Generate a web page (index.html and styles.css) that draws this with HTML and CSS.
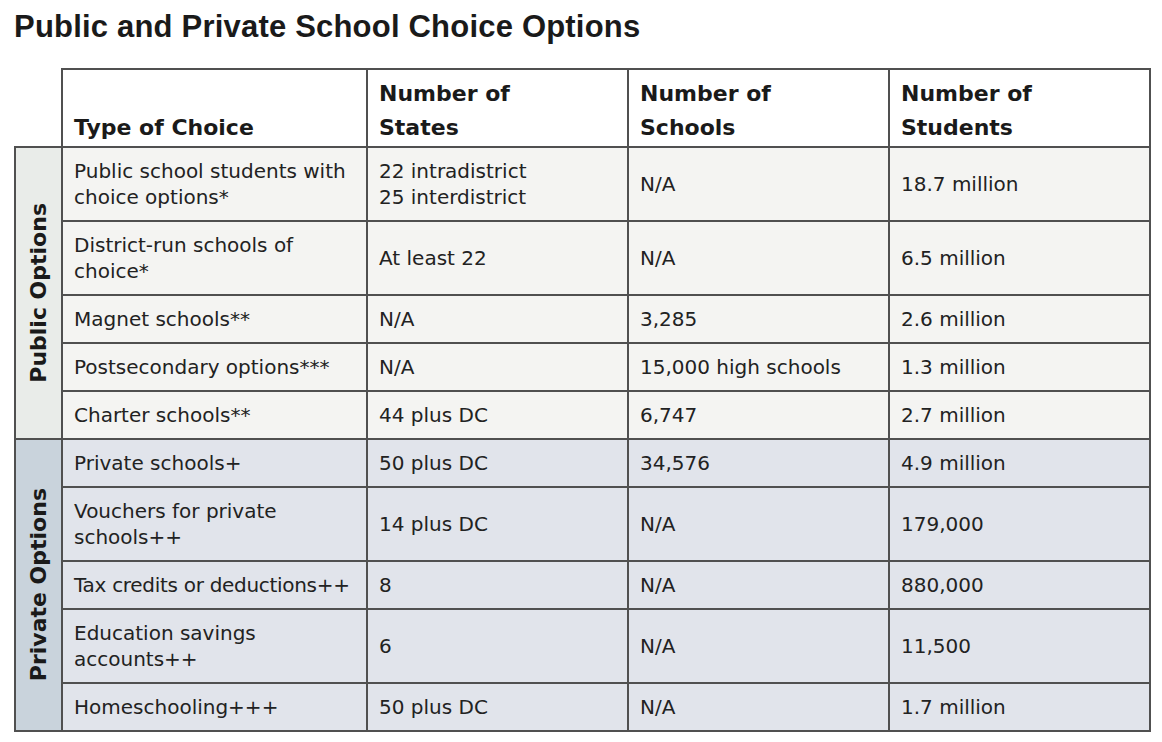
FILE: index.html
```html
<!DOCTYPE html>
<html>
<head>
<meta charset="utf-8">
<link rel="stylesheet" href="styles.css">
</head>
<body>
<div class="page">
  <h1 class="title">Public and Private School Choice Options</h1>
  <table class="choices">
    <colgroup>
      <col class="c-group">
      <col class="c-type">
      <col class="c-num">
      <col class="c-num">
      <col class="c-num">
    </colgroup>
    <thead>
      <tr>
        <th class="blank"></th>
        <th>Type of Choice</th>
        <th>Number of<br>States</th>
        <th>Number of<br>Schools</th>
        <th>Number of<br>Students</th>
      </tr>
    </thead>
    <tbody class="public">
      <tr>
        <td class="group" rowspan="5"><div class="group-label">Public Options</div></td>
        <td>Public school students with<br>choice options*</td>
        <td>22 intradistrict<br>25 interdistrict</td>
        <td>N/A</td>
        <td>18.7 million</td>
      </tr>
      <tr>
        <td>District-run schools of<br>choice*</td>
        <td>At least 22</td>
        <td>N/A</td>
        <td>6.5 million</td>
      </tr>
      <tr>
        <td>Magnet schools**</td>
        <td>N/A</td>
        <td>3,285</td>
        <td>2.6 million</td>
      </tr>
      <tr>
        <td>Postsecondary options***</td>
        <td>N/A</td>
        <td>15,000 high schools</td>
        <td>1.3 million</td>
      </tr>
      <tr>
        <td>Charter schools**</td>
        <td>44 plus DC</td>
        <td>6,747</td>
        <td>2.7 million</td>
      </tr>
    </tbody>
    <tbody class="private">
      <tr>
        <td class="group" rowspan="5"><div class="group-label">Private Options</div></td>
        <td>Private schools+</td>
        <td>50 plus DC</td>
        <td>34,576</td>
        <td>4.9 million</td>
      </tr>
      <tr>
        <td>Vouchers for private<br>schools++</td>
        <td>14 plus DC</td>
        <td>N/A</td>
        <td>179,000</td>
      </tr>
      <tr>
        <td class="tight">Tax credits or deductions++</td>
        <td>8</td>
        <td>N/A</td>
        <td>880,000</td>
      </tr>
      <tr>
        <td>Education savings<br>accounts++</td>
        <td>6</td>
        <td>N/A</td>
        <td>11,500</td>
      </tr>
      <tr>
        <td>Homeschooling+++</td>
        <td>50 plus DC</td>
        <td>N/A</td>
        <td>1.7 million</td>
      </tr>
    </tbody>
  </table>
</div>
</body>
</html>
```

FILE: styles.css
```css
html, body {
  margin: 0;
  padding: 0;
  background: #ffffff;
}

.page {
  padding: 10px 0 0 14px;
  font-family: "DejaVu Sans", "Liberation Sans", Arial, sans-serif;
  color: #222222;
}

.title {
  margin: 0 0 24px 0;
  font-family: "Liberation Sans", Arial, sans-serif;
  font-size: 31px;
  line-height: 34px;
  font-weight: 700;
  color: #1a1a1a;
  letter-spacing: 0.2px;
}

.choices {
  border-collapse: collapse;
  table-layout: fixed;
  width: 1137px;
}

.c-group { width: 47px; }
.c-type { width: 305px; }
.c-num { width: 261px; }

.choices th,
.choices td {
  border: 2px solid #505050;
  text-align: left;
  padding: 10px 11px;
  font-size: 20px;
  line-height: 26px;
  vertical-align: middle;
}

.choices td.tight {
  white-space: nowrap;
  letter-spacing: -0.3px;
  padding-right: 4px;
}

.choices th {
  background: #ffffff;
  font-size: 22px;
  line-height: 34px;
  font-weight: 700;
  vertical-align: bottom;
  padding: 3px 11px 1px 11px;
  color: #1a1a1a;
}

.choices th.blank {
  border: none;
  border-bottom: 2px solid #505050;
  background: transparent;
}

.choices thead tr {
  height: 78px;
}

.public td {
  background: #f4f4f2;
}

.public td.group {
  background: #e9ece9;
}

.private td {
  background: #e1e4eb;
}

.private td.group {
  background: #c9d3dc;
}

.choices td.group {
  padding: 0;
  text-align: center;
  vertical-align: middle;
}

.group-label {
  writing-mode: vertical-rl;
  transform: rotate(180deg);
  font-size: 22px;
  font-weight: 700;
  line-height: 26px;
  margin: 0 auto;
  color: #1a1a1a;
}
```
